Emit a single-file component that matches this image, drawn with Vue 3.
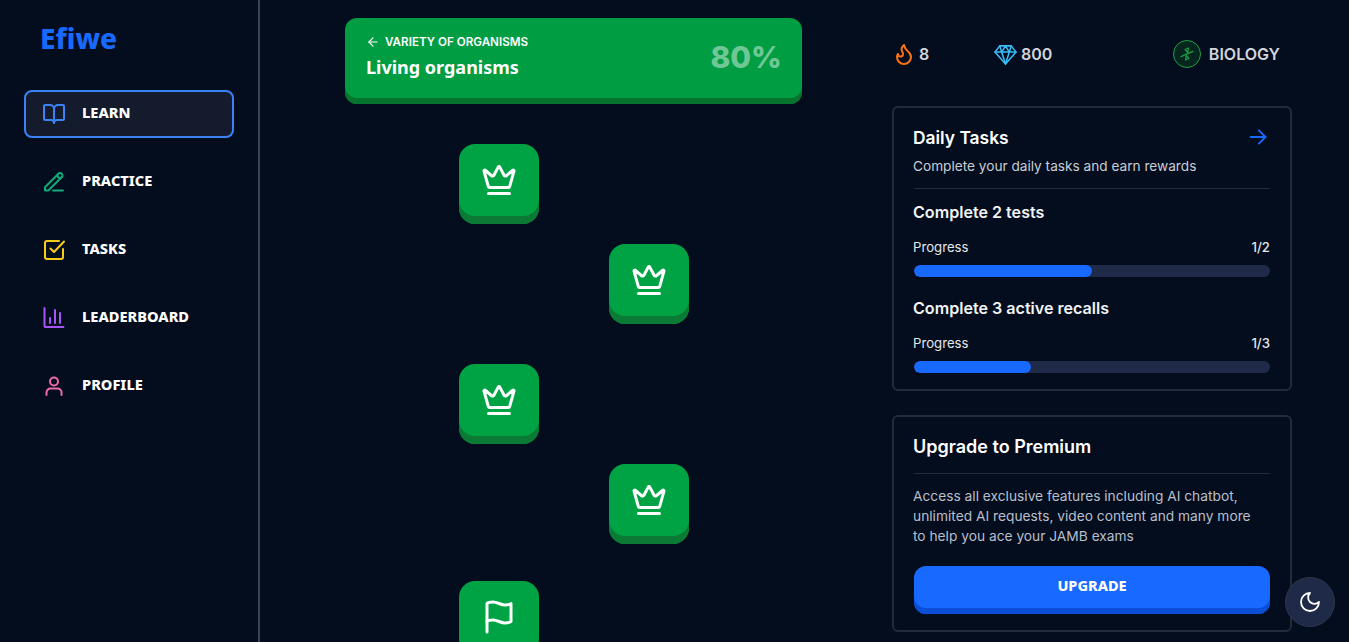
<script setup>
const nav = [
  { label: 'LEARN', cls: 'blue', active: true, paths: ['M12 7v14', 'M3 18a1 1 0 0 1-1-1V4a1 1 0 0 1 1-1h5a4 4 0 0 1 4 4 4 4 0 0 1 4-4h5a1 1 0 0 1 1 1v13a1 1 0 0 1-1 1h-6a3 3 0 0 0-3 3 3 3 0 0 0-3-3z'] },
  { label: 'PRACTICE', cls: 'green', paths: ['M15.700 4.500 3 17.200v3.300h3.300L19.300 7.500', 'M15.500 5.500a2.500 2.500 0 1 1 5 0 2.500 2.500 0 1 1-5 0', 'M11 20.500h10'] },
  { label: 'TASKS', cls: 'yellow', paths: ['M21 11v8a2 2 0 0 1-2 2H5a2 2 0 0 1-2-2V5a2 2 0 0 1 2-2h12', 'm8.500 10.500 3.500 3.500 10-10.500'] },
  { label: 'LEADERBOARD', cls: 'purple', paths: ['M2.500 2v18a1 1 0 0 0 1 1h18', 'M8 17v-5', 'M13 17V4', 'M18 17V7'] },
  { label: 'PROFILE', cls: 'pink', paths: ['M4.500 21v-2.500a4 4 0 0 1 4-4h7a4 4 0 0 1 4 4V21', 'M12 11.500a4 4 0 1 0 0-8 4 4 0 0 0 0 8z'] }
]
const crown = ['M11.562 3.266a.5.5 0 0 1 .876 0L15.390 8.870a1 1 0 0 0 1.516.294L21.183 5.500a.5.5 0 0 1 .798.519l-2.834 10.246a1 1 0 0 1-.956.734H5.810a1 1 0 0 1-.957-.734L2.020 6.020a.5.5 0 0 1 .798-.519l4.276 3.664a1 1 0 0 0 1.516-.294z', 'M5 21h14']
const flag = ['M4 15s1-1 4-1 5 2 8 2 4-1 4-1V3s-1 1-4 1-5-2-8-2-4 1-4 1z', 'M4 22v-7']
const nodes = [
  { id: 1, side: 'near', gap: 'g0', paths: crown },
  { id: 2, side: 'far', gap: 'g20', paths: crown },
  { id: 3, side: 'near', gap: 'g40', paths: crown },
  { id: 4, side: 'far', gap: 'g20', paths: crown },
  { id: 5, side: 'near', gap: 'g37', paths: flag }
]
const tasks = [
  { title: 'Complete 2 tests', value: '1/2', pct: 50 },
  { title: 'Complete 3 active recalls', value: '1/3', pct: 33 }
]
</script>

<template>
  <div class="page">
    <aside class="sidebar">
      <div class="logo">Efiwe</div>
      <nav class="nav">
        <a v-for="item in nav" :key="item.label" class="nav-item" :class="{ active: item.active }">
          <svg class="nav-icon" :class="item.cls" viewBox="0 0 24 24" fill="none" stroke="currentColor" stroke-width="2" stroke-linecap="round" stroke-linejoin="round">
            <path v-for="d in item.paths" :key="d" :d="d" />
          </svg>
          <span>{{ item.label }}</span>
        </a>
      </nav>
    </aside>

    <main class="center">
      <header class="unit">
        <div>
          <div class="crumb">
            <svg class="back" viewBox="0 0 24 24" fill="none" stroke="currentColor" stroke-width="2" stroke-linecap="round" stroke-linejoin="round"><path d="m12 19-7-7 7-7" /><path d="M19 12H5" /></svg>
            <span>VARIETY OF ORGANISMS</span>
          </div>
          <div class="unit-title">Living organisms</div>
        </div>
        <div class="pct">80%</div>
      </header>
      <div class="path">
        <button v-for="n in nodes" :key="n.id" class="node" :class="[n.side, n.gap]">
          <svg class="node-icon" viewBox="0 0 24 24" fill="none" stroke="currentColor" stroke-width="2" stroke-linecap="round" stroke-linejoin="round">
            <path v-for="d in n.paths" :key="d" :d="d" />
          </svg>
        </button>
      </div>
    </main>

    <section class="aside-right">
      <div class="stats">
        <div class="stat streak">
          <svg class="flame" viewBox="0 0 24 24" fill="none" stroke="currentColor" stroke-width="2" stroke-linecap="round" stroke-linejoin="round"><path d="M8.500 14.500A2.500 2.500 0 0 0 11 12c0-1.380-.5-2-1-3-1.072-2.143-.224-4.054 2-6 .5 2.500 2 4.900 4 6.500 2 1.600 3 3.500 3 5.500a7 7 0 1 1-14 0c0-1.153.433-2.294 1-3a2.500 2.500 0 0 0 2.500 2.500z" /></svg>
          <span>8</span>
        </div>
        <div class="stat gems">
          <svg class="gem" viewBox="0 0 24 24" fill="none" stroke="currentColor" stroke-width="1.600" stroke-linecap="round" stroke-linejoin="round"><path d="M6 3h12l5 6.500L12 22 1 9.500z" /><path d="M1 9.500h22" /><path d="M8 9.500 12 22l4-12.500" /><path d="m6 3 2 6.500L12 3l4 6.500L18 3" /></svg>
          <span>800</span>
        </div>
        <div class="stat subject">
          <span class="subject-badge">
            <svg class="dna" viewBox="0 0 24 24" fill="none" stroke="currentColor" stroke-width="1.600" stroke-linecap="round" stroke-linejoin="round"><path d="M4 15.500 20 8.500" /><path d="m14 4-1 6-3.500-4z" /><path d="m10 20 1-6 3.500 4z" /></svg>
          </span>
          <span>BIOLOGY</span>
        </div>
      </div>

      <div class="card daily">
        <div class="card-head">
          <h2>Daily Tasks</h2>
          <svg class="arrow" viewBox="0 0 24 24" fill="none" stroke="currentColor" stroke-width="2.200" stroke-linecap="round" stroke-linejoin="round"><path d="M3 12h18" /><path d="m13 4 8 8-8 8" /></svg>
        </div>
        <p class="sub">Complete your daily tasks and earn rewards</p>
        <div class="rule"></div>
        <div v-for="t in tasks" :key="t.title" class="task">
          <h3>{{ t.title }}</h3>
          <div class="progress-row"><span class="prog">Progress</span><span class="val">{{ t.value }}</span></div>
          <div class="bar"><div class="fill" :style="{ width: t.pct + '%' }"></div></div>
        </div>
      </div>

      <div class="card premium">
        <h2>Upgrade to Premium</h2>
        <div class="rule"></div>
        <p class="desc">Access all exclusive features including AI chatbot, unlimited AI requests, video content and many more to help you ace your JAMB exams</p>
        <button class="upgrade">UPGRADE</button>
      </div>
    </section>

    <button class="theme">
      <svg viewBox="0 0 24 24" fill="none" stroke="currentColor" stroke-width="1.800" stroke-linecap="round" stroke-linejoin="round"><path d="M12 3a6 6 0 0 0 9 9 9 9 0 1 1-9-9Z" /></svg>
    </button>
  </div>
</template>

<style>
html, body { margin: 0; background: #030d1e; overflow: hidden; }
</style>

<style scoped>
* { box-sizing: border-box; }
.page {
  height: 642px;
  overflow: hidden;
  display: flex;
  background: #030d1e;
  color: #fff;
  font-family: "Inter", "Noto Sans", sans-serif;
}
.sidebar {
  width: 260px;
  flex: none;
  border-right: 2px solid #3b4354;
  padding: 20px 24px 0;
}
.logo {
  font-family: "Noto Sans", sans-serif;
  font-weight: 800;
  font-size: 28px;
  line-height: 36px;
  color: #1769ff;
  padding-left: 16px;
}
.nav { margin-top: 34px; display: flex; flex-direction: column; gap: 20px; }
.nav-item {
  width: 210px;
  height: 48px;
  display: flex;
  align-items: center;
  gap: 16px;
  padding-left: 16px;
  border: 2px solid transparent;
  border-radius: 8px;
  font-family: "Noto Sans", sans-serif;
  font-weight: 800;
  font-size: 14.600px;
}
.nav-item span { margin-bottom: 4px; }
.nav-item.active { border-color: #3b82f6; background: #131b2c; }
.nav-icon { width: 24px; height: 24px; flex: none; }
.blue { color: #3b82f6; }
.green { color: #10a97b; }
.yellow { color: #facc15; }
.purple { color: #a855f7; }
.pink { color: #ec6ba8; }

.center { width: 457px; flex: none; margin-left: 85px; padding-top: 18px; }
.unit {
  height: 86px;
  background: #009d43;
  border-radius: 12px;
  box-shadow: inset 0 -6px 0 #06732f;
  display: flex;
  justify-content: space-between;
  align-items: center;
  padding: 0 21px 8px;
}
.crumb { display: flex; align-items: center; gap: 5px; font-size: 11.650px; font-weight: 600; line-height: 16px; }
.back { width: 14px; height: 14px; }
.unit-title { font-family: "Noto Sans", sans-serif; font-weight: 700; font-size: 18px; line-height: 26px; margin-top: 4px; }
.pct { font-size: 30px; font-weight: 800; margin-right: -1px; color: rgba(255, 255, 255, 0.45); }
.path { display: flex; flex-direction: column; align-items: flex-start; padding-top: 40px; }
.node {
  width: 80px;
  height: 80px;
  flex: none;
  border: 0;
  padding: 0 0 8px;
  border-radius: 16px;
  background: #00a344;
  box-shadow: inset 0 -8px 0 #0a7a34;
  color: #fff;
  display: flex;
  align-items: center;
  justify-content: center;
}
.near { margin-left: 114px; }
.far { margin-left: 264px; }
.g20 { margin-top: 20px; }
.g40 { margin-top: 40px; }
.g37 { margin-top: 37px; }
.node-icon { width: 36px; height: 36px; }

.aside-right { width: 400px; flex: none; margin-left: 90px; }
.stats { height: 106px; display: flex; align-items: center; padding: 2px 12px 0 0; font-size: 16px; font-weight: 600; color: #d1d5db; }
.stat { display: flex; align-items: center; }
.streak { gap: 3px; width: 102px; }
.flame { width: 24px; height: 24px; color: #f97316; }
.gems { gap: 4px; }
.gem { width: 23px; height: 23px; color: #38bdf8; }
.subject { margin-left: auto; gap: 8px; }
.subject-badge {
  width: 28px;
  height: 28px;
  border: 1px solid #22a045;
  border-radius: 50%;
  background: #04261f;
  display: flex;
  align-items: center;
  justify-content: center;
}
.dna { width: 18px; height: 18px; color: #22a045; }
.card { border: 2px solid #232b3b; border-radius: 6px; padding: 0 20px; }
.daily { height: 285px; padding-top: 17px; }
.premium { height: 217px; margin-top: 24px; padding-top: 18px; }
.card-head { display: flex; justify-content: space-between; align-items: center; height: 26px; }
h2 { margin: 0 0 0 -1px; line-height: 24px; font-weight: 600; color: #fff; }
.daily h2 { font-size: 17.400px; }
.premium h2 { font-size: 18px; }
.arrow { width: 20px; height: 20px; color: #1769ff; margin-right: 2px; margin-top: -2px; }
.sub { margin: 5px 0 0 -1px; font-size: 13.650px; line-height: 20px; color: #c9ced6; }
.rule { height: 1px; background: #232b3b; }
.daily .rule { margin-top: 12px; }
.task { margin-top: 12px; }
.task + .task { margin-top: 20px; }
h3 { margin: 0 0 0 -1px; font-size: 16.100px; line-height: 22px; font-weight: 600; color: #f1f3f5; }
.progress-row { display: flex; justify-content: space-between; margin-top: 14px; font-size: 13.200px; line-height: 20px; color: #e5e7eb; }
.prog { margin-left: -1px; }
.val { font-weight: 500; }
.bar { height: 12px; margin-top: 8px; border-radius: 6px; background: #1e2a47; overflow: hidden; }
.fill { height: 100%; border-radius: 6px; background: #1769ff; }
.premium .rule { margin-top: 14px; }
.desc { margin: 12px 0 0 -1px; width: 345px; font-size: 13.750px; line-height: 20px; color: #b9bfca; }
.upgrade {
  width: 100%;
  height: 48px;
  margin-top: 20px;
  border: 0;
  padding: 0 0 10px;
  border-radius: 12px;
  background: #1769ff;
  box-shadow: inset 0 -6px 0 #0a4fd6;
  color: #fff;
  font-family: "Noto Sans", sans-serif;
  font-weight: 800;
  font-size: 14.500px;
}
.theme {
  position: fixed;
  left: 1285px;
  top: 577px;
  width: 50px;
  height: 50px;
  border-radius: 50%;
  border: 1px solid #2e3748;
  background: #1e2a47;
  color: #fff;
  padding: 0;
  display: flex;
  align-items: center;
  justify-content: center;
}
.theme svg { width: 24px; height: 24px; }
</style>
